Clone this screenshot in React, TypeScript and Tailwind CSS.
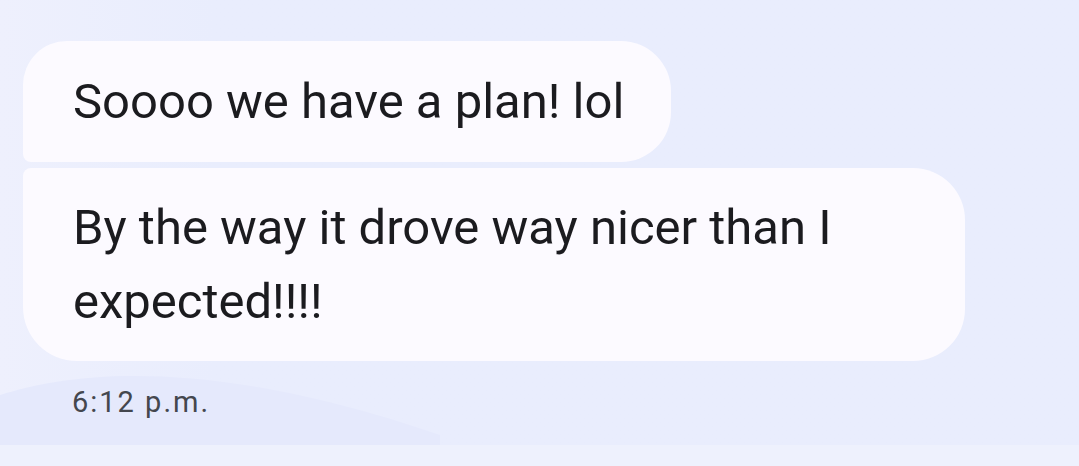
import React from "react";

export default function App() {
  return (
    <div
      className="w-[1079px] h-[466px] flex flex-col bg-[#e9edfd] overflow-hidden"
      style={{ fontFamily: "Roboto, 'Noto Sans', sans-serif" }}
    >
      <div className="relative h-[445px] bg-gradient-to-r from-[#eef0fd] via-[#e9edfd] via-20% to-[#e9edfd]">
        {/* soft wave in the wallpaper */}
        <svg className="absolute left-0 bottom-0" width="460" height="80" viewBox="0 0 460 80">
          <path d="M0 30 C 80 4, 220 -6, 440 70 L 440 80 L 0 80 Z" fill="#e5e9fc" />
        </svg>

        <div className="relative flex flex-col items-start gap-[6px] pt-[41px] pl-[23px]">
          <div className="bg-[#fcfaff] rounded-tl-[44px] rounded-tr-[50px] rounded-br-[50px] rounded-bl-[8px] pl-[50px] pr-[47px] pt-[24px] pb-[23px] text-[49px] leading-[74px] text-[#1b1b1f]">
            Soooo we have a plan! lol
          </div>
          <div className="bg-[#fcfaff] max-w-[942px] rounded-tl-[8px] rounded-tr-[52px] rounded-br-[52px] rounded-bl-[54px] pl-[50px] pr-[48px] pt-[23px] pb-[22px] text-[49px] leading-[74px] text-[#1b1b1f]">
            By the way it drove way nicer than I expected!!!!
          </div>
          <div className="mt-[17px] pl-[49px] text-[29px] leading-[36px] tracking-[2px] text-[#44474e]">6:12 p.m.</div>
        </div>
      </div>
      <div className="h-[21px] bg-[#eef1fd]" />
    </div>
  );
}
